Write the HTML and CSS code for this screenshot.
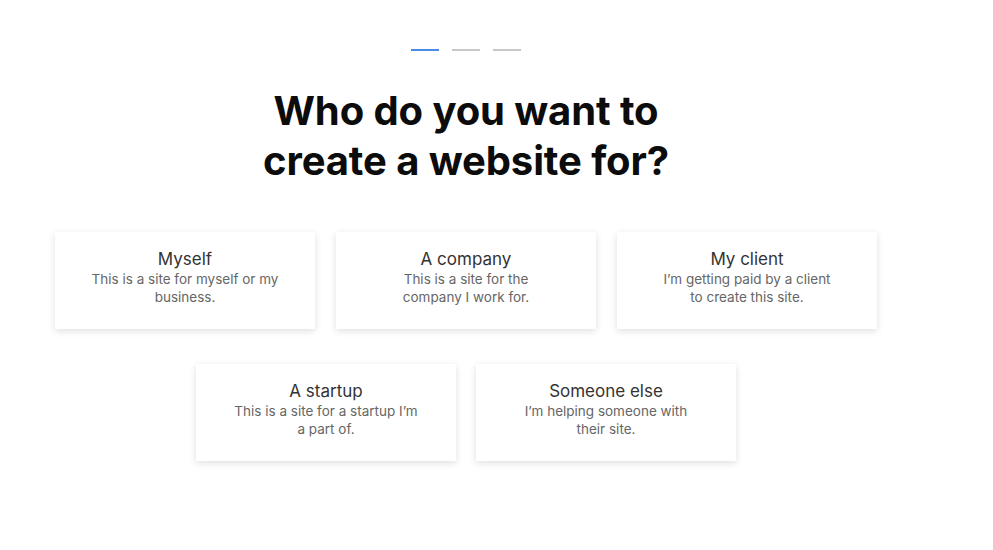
FILE: index.html
```html
<!DOCTYPE html>
<html>
<head>
<meta charset="utf-8">
<link rel="stylesheet" href="styles.css">
</head>
<body>
<div class="page">
  <div class="steps">
    <span class="step active"></span>
    <span class="step"></span>
    <span class="step"></span>
  </div>
  <h1 class="title">Who do you want to<br>create a website for?</h1>
  <div class="row">
    <div class="card"><div class="card-title">Myself</div><div class="card-desc">This is a site for myself or my<br>business.</div></div>
    <div class="card"><div class="card-title">A company</div><div class="card-desc">This is a site for the<br>company I work for.</div></div>
    <div class="card"><div class="card-title">My client</div><div class="card-desc">I’m getting paid by a client<br>to create this site.</div></div>
  </div>
  <div class="row row2">
    <div class="card"><div class="card-title">A startup</div><div class="card-desc">This is a site for a startup I’m<br>a part of.</div></div>
    <div class="card"><div class="card-title">Someone else</div><div class="card-desc">I’m helping someone with<br>their site.</div></div>
  </div>
</div>
</body>
</html>
```
FILE: styles.css
```css
html, body { margin: 0; padding: 0; background: #fff; }
body { font-family: Inter, "Noto Sans", sans-serif; }
.page {
  width: 932px;
  display: flex;
  flex-direction: column;
  align-items: center;
  padding-top: 49px;
  padding-bottom: 60px;
}
.steps { display: flex; gap: 13px; }
.step { width: 28px; height: 2px; background: #c8c8c8; display: block; }
.step.active { background: #4a8ae8; }
.title {
  margin: 35px 0 0 0;
  font-size: 40px;
  line-height: 50px;
  font-weight: 700;
  color: #0c0c0c;
  text-align: center;
  letter-spacing: -0.1px;
}
.row { display: flex; gap: 21px; margin-top: 46px; }
.row2 { margin-top: 35px; gap: 20px; }
.card {
  width: 260px;
  height: 97px;
  box-sizing: border-box;
  padding: 17px 0 0;
  background: #fff;
  box-shadow: 0 2px 7px rgba(0,0,0,0.13);
  text-align: center;
}
.card-title { font-size: 17px; line-height: 20px; color: #333; font-weight: 400; }
.card-desc { font-size: 13.5px; line-height: 18px; color: #666; white-space: nowrap; margin-top: 1px; }
```
